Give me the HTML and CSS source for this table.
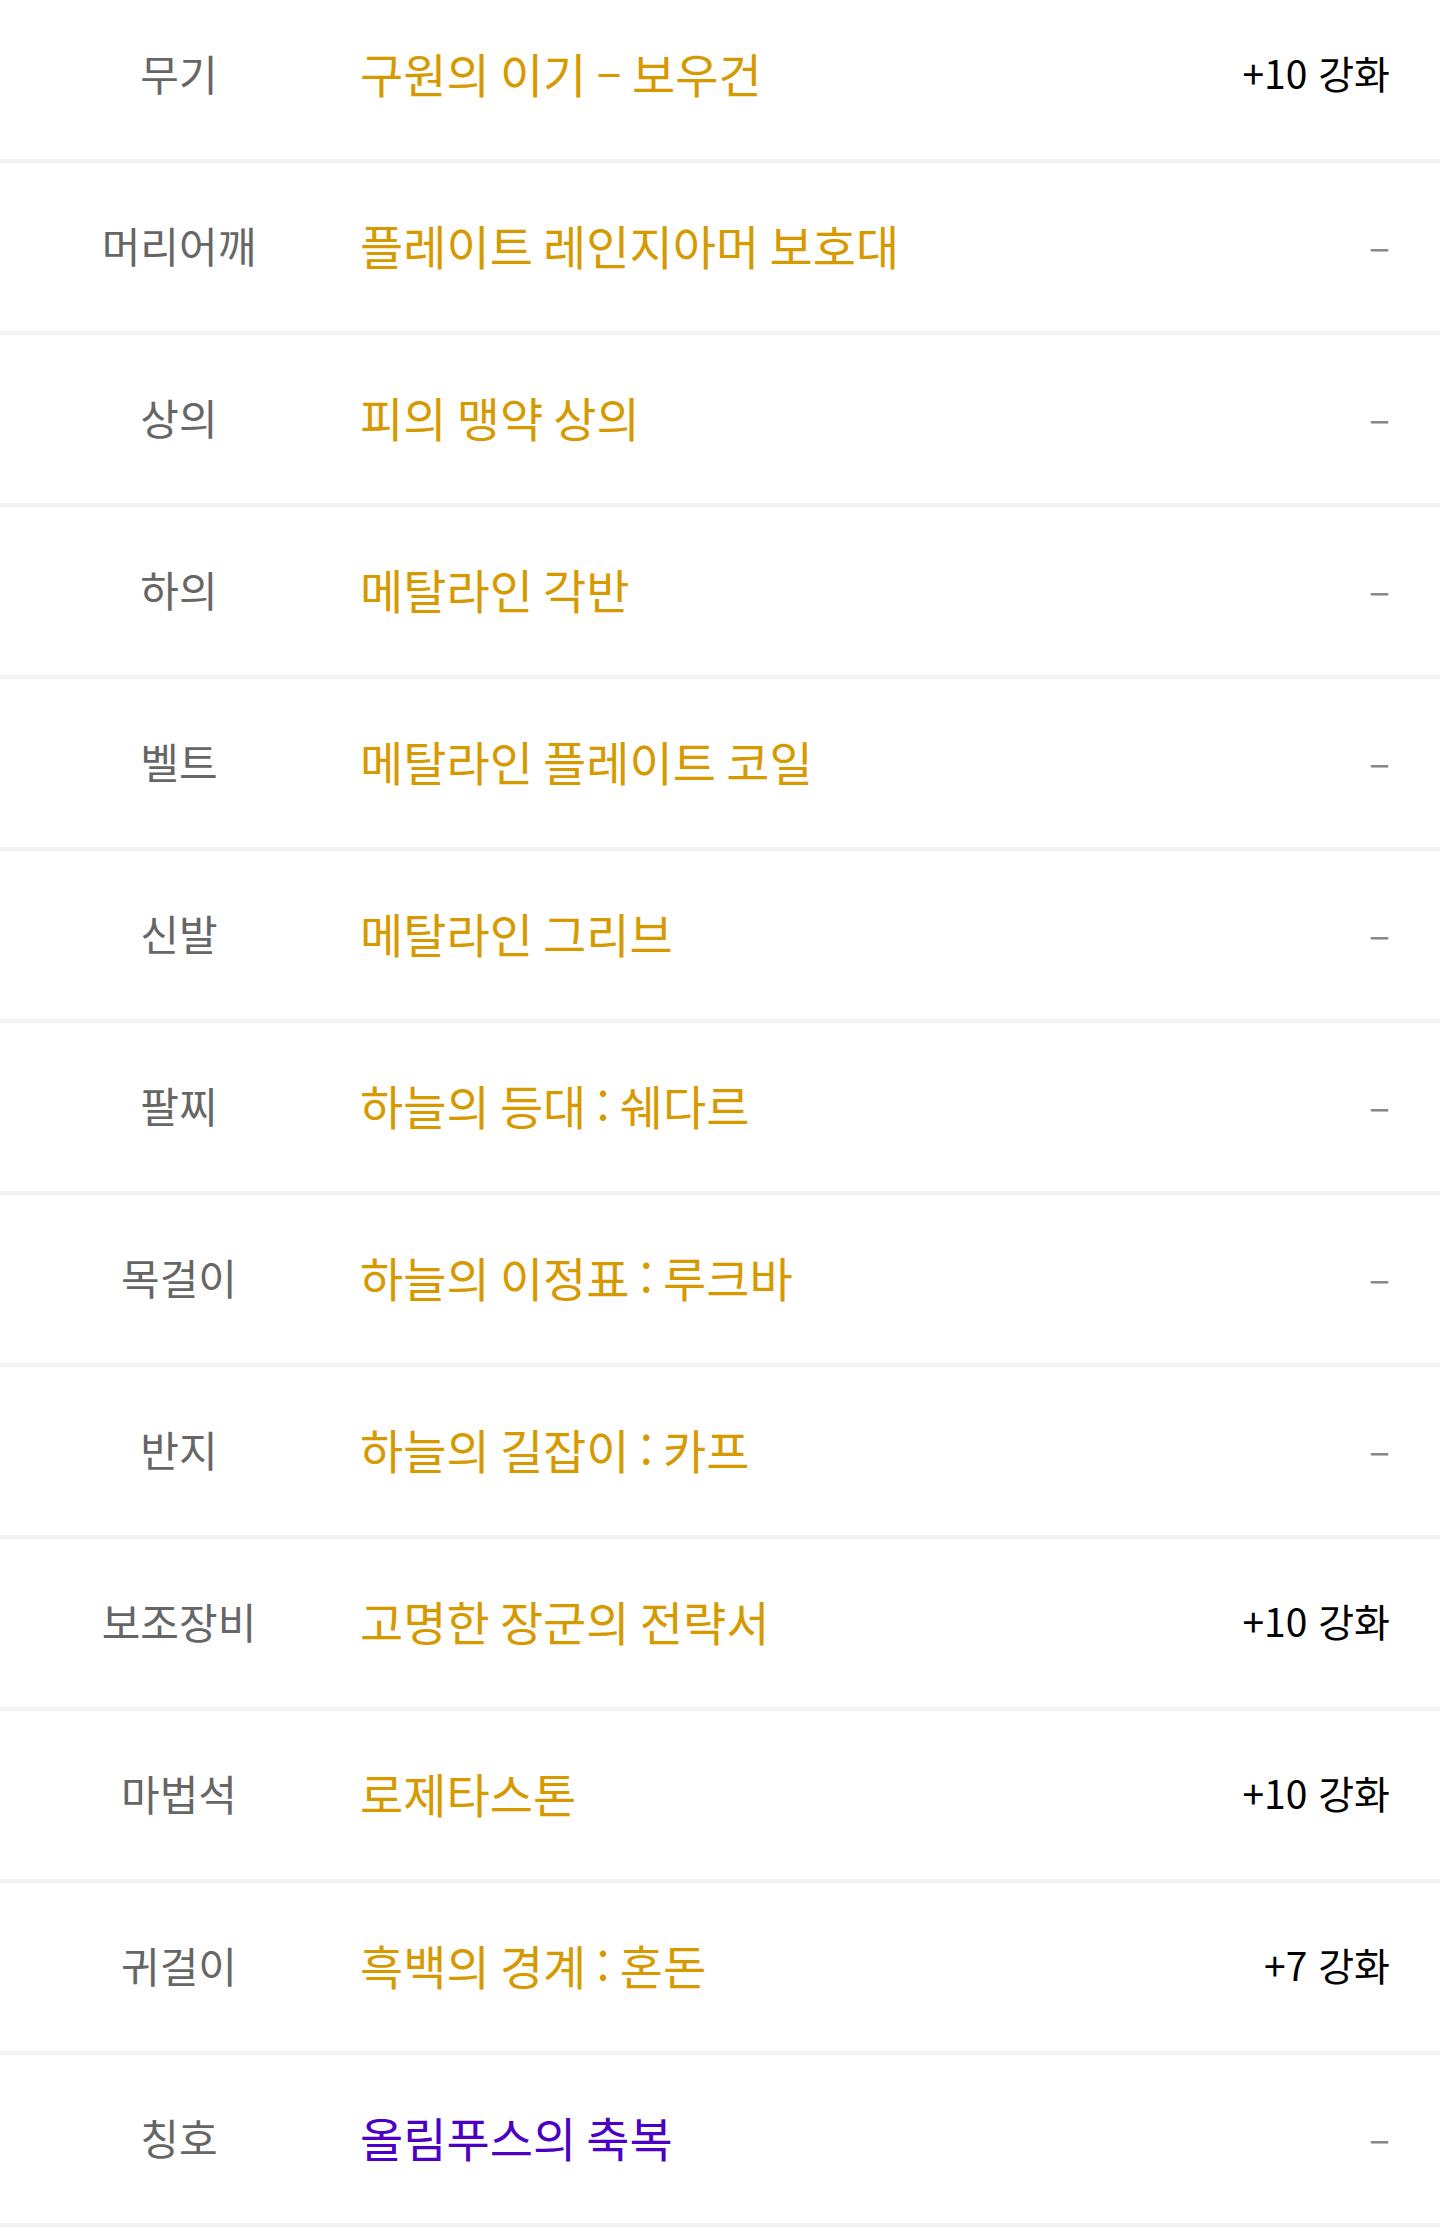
FILE: index.html
```html
<!DOCTYPE html>
<html lang="ko">
<head>
    <meta charset="UTF-8">
    <meta name="viewport" content="width=device-width, initial-scale=1.0">
    <title>장비</title>
    <link rel="stylesheet" href="styles.css">
</head>
<body>

<div class="equip-list">
    <div class="equip-row">
        <div class="slot">무기</div>
        <div class="item">구원의 이기 – 보우건</div>
        <div class="enhance">+10 강화</div>
    </div>
    <div class="equip-row">
        <div class="slot">머리어깨</div>
        <div class="item">플레이트 레인지아머 보호대</div>
        <div class="enhance none">–</div>
    </div>
    <div class="equip-row">
        <div class="slot">상의</div>
        <div class="item">피의 맹약 상의</div>
        <div class="enhance none">–</div>
    </div>
    <div class="equip-row">
        <div class="slot">하의</div>
        <div class="item">메탈라인 각반</div>
        <div class="enhance none">–</div>
    </div>
    <div class="equip-row">
        <div class="slot">벨트</div>
        <div class="item">메탈라인 플레이트 코일</div>
        <div class="enhance none">–</div>
    </div>
    <div class="equip-row">
        <div class="slot">신발</div>
        <div class="item">메탈라인 그리브</div>
        <div class="enhance none">–</div>
    </div>
    <div class="equip-row">
        <div class="slot">팔찌</div>
        <div class="item">하늘의 등대 : 쉐다르</div>
        <div class="enhance none">–</div>
    </div>
    <div class="equip-row">
        <div class="slot">목걸이</div>
        <div class="item">하늘의 이정표 : 루크바</div>
        <div class="enhance none">–</div>
    </div>
    <div class="equip-row">
        <div class="slot">반지</div>
        <div class="item">하늘의 길잡이 : 카프</div>
        <div class="enhance none">–</div>
    </div>
    <div class="equip-row">
        <div class="slot">보조장비</div>
        <div class="item">고명한 장군의 전략서</div>
        <div class="enhance">+10 강화</div>
    </div>
    <div class="equip-row">
        <div class="slot">마법석</div>
        <div class="item">로제타스톤</div>
        <div class="enhance">+10 강화</div>
    </div>
    <div class="equip-row">
        <div class="slot">귀걸이</div>
        <div class="item">흑백의 경계 : 혼돈</div>
        <div class="enhance">+7 강화</div>
    </div>
    <div class="equip-row">
        <div class="slot">칭호</div>
        <div class="item rare">올림푸스의 축복</div>
        <div class="enhance none">–</div>
    </div>
</div>

</body>
</html>
```

FILE: styles.css
```css
:root {
    --line: #f2f2f2;
    --slot-text: #666;
    --item-gold: #d69a00;
    --item-purple: #4b00c4;
    --dash: #888;
}
body {
    margin: 0;
    padding: 0;
    background: #ffffff;
    font-family: "Noto Sans CJK KR", "Noto Sans", sans-serif;
    color: #000;
}
.equip-list {
    margin-top: -9px;
}
.equip-row {
    display: grid;
    grid-template-columns: 358px 1fr auto;
    align-items: center;
    height: 162px;
    padding: 0 50px 6px 0;
    border-bottom: 4px solid var(--line);
}
.slot {
    text-align: center;
    font-size: 42px;
    color: var(--slot-text);
}
.item {
    padding-left: 2px;
    font-size: 47px;
    word-spacing: -3px;
    color: var(--item-gold);
}
.item.rare {
    color: var(--item-purple);
}
.enhance {
    font-size: 39px;
    color: #000;
}
.enhance.none {
    color: var(--dash);
}
```
